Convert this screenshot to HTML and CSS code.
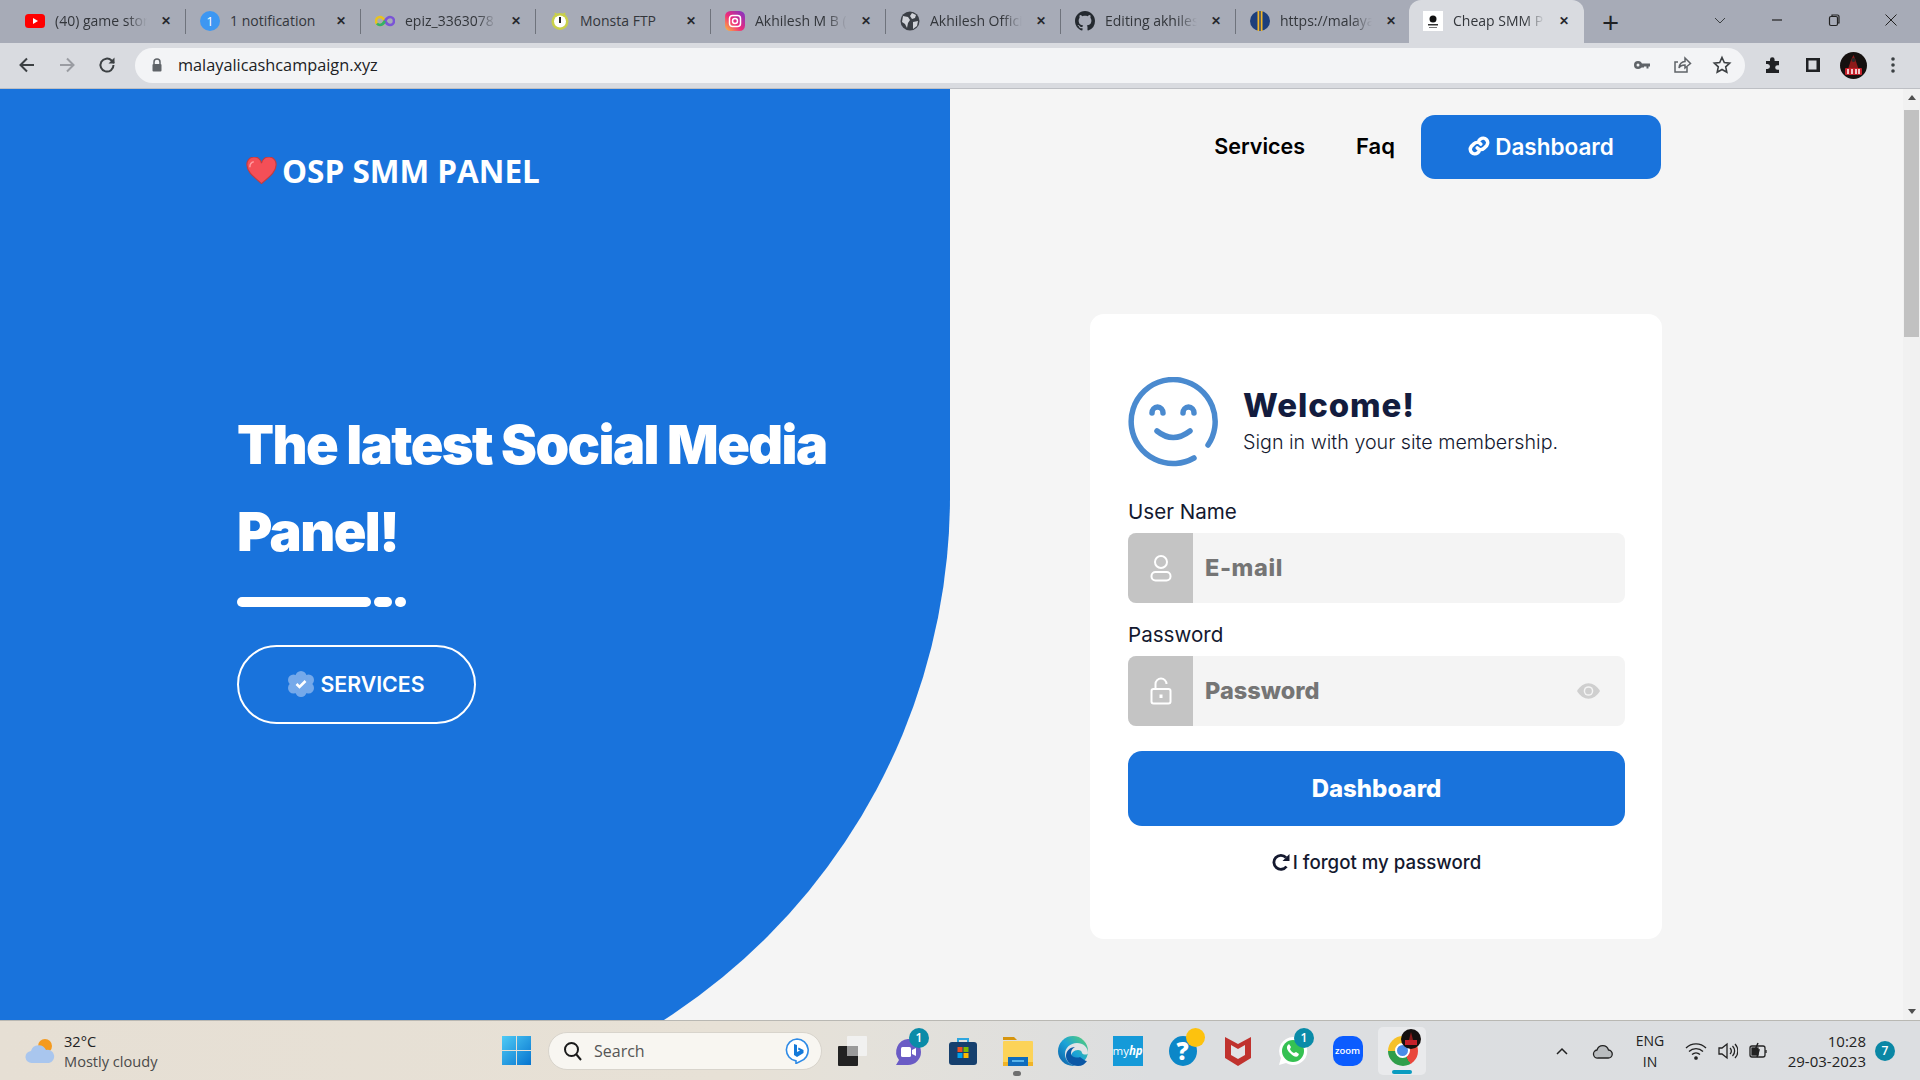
FILE: index.html
```html
<!DOCTYPE html>
<html lang="en">
<head>
<meta charset="utf-8">
<title>Cheap SMM Panel</title>
<link rel="stylesheet" href="styles.css">
</head>
<body>
<div class="screen">
  <header class="tabstrip">
    <div class="tab"><svg class="fav" viewBox="0 0 20 20"><rect x="0" y="3" width="20" height="14" rx="3.5" fill="#f00"/><path d="M8 7l5 3-5 3z" fill="#fff"/></svg><span class="tab-title">(40) game stor</span><span class="tab-x">✕</span></div><i class="sep"></i>
    <div class="tab"><svg class="fav" viewBox="0 0 20 20"><circle cx="10" cy="10" r="10" fill="#3d97f2"/><text x="10" y="15" class="fav-num">1</text></svg><span class="tab-title tab-plain">1 notification</span><span class="tab-x">✕</span></div><i class="sep"></i>
    <div class="tab"><svg class="fav" viewBox="0 0 20 20" fill="none" stroke-width="2.6"><path d="M10 10C8 6.5 6.500 6 5 6a4 4 0 0 0 0 8c1.500 0 3-.5 5-4z" stroke="#e8c31f"/><path d="M10 10c2-3.500 3.500-4 5-4a4 4 0 0 1 0 8c-1.500 0-3-.5-5-4z" stroke="#7a54d6"/><path d="M2 12.500A4 4 0 0 0 5 14c1.500 0 3-.5 5-4" stroke="#31b26a"/></svg><span class="tab-title">epiz_3363078</span><span class="tab-x">✕</span></div><i class="sep"></i>
    <div class="tab"><svg class="fav" viewBox="0 0 20 20"><circle cx="10" cy="10.500" r="8.500" fill="#c9d04a"/><circle cx="10" cy="10.500" r="6" fill="#fff"/><rect x="9" y="6" width="2" height="6" fill="#222"/><path d="M5 2l2 3M15 2l-2 3" stroke="#c9d04a" stroke-width="2"/></svg><span class="tab-title tab-plain">Monsta FTP</span><span class="tab-x">✕</span></div><i class="sep"></i>
    <div class="tab"><svg class="fav" viewBox="0 0 20 20"><defs><linearGradient id="ig" x1="0" y1="1" x2="1" y2="0"><stop offset="0" stop-color="#fdc13a"/><stop offset=".45" stop-color="#ee2a7b"/><stop offset="1" stop-color="#7a35c9"/></linearGradient></defs><rect width="20" height="20" rx="5.500" fill="url(#ig)"/><rect x="4.500" y="4.500" width="11" height="11" rx="3" fill="none" stroke="#fff" stroke-width="1.500"/><circle cx="10" cy="10" r="2.500" fill="none" stroke="#fff" stroke-width="1.500"/></svg><span class="tab-title">Akhilesh M B (</span><span class="tab-x">✕</span></div><i class="sep"></i>
    <div class="tab"><svg class="fav" viewBox="0 0 20 20"><circle cx="10" cy="10" r="9.500" fill="#3b3f46"/><path d="M3 5l5 1 2 3-2 3-1 5-2-4-3-2zM12 2l4 2-1 3-3 1-2-3zM13 11l5-1-1 5-4 3z" fill="#d0d2d8"/></svg><span class="tab-title">Akhilesh Offici</span><span class="tab-x">✕</span></div><i class="sep"></i>
    <div class="tab"><svg class="fav" viewBox="0 0 16 16"><path fill="#24292f" d="M8 0C3.580 0 0 3.580 0 8c0 3.540 2.290 6.530 5.470 7.590.4.070.55-.17.55-.38 0-.19-.01-.82-.01-1.490-2.010.37-2.530-.49-2.690-.94-.09-.23-.48-.94-.82-1.130-.28-.15-.68-.52-.01-.53.630-.01 1.080.58 1.230.82.720 1.210 1.870.87 2.330.66.070-.52.28-.87.510-1.070-1.780-.2-3.640-.89-3.640-3.950 0-.87.310-1.590.820-2.150-.08-.2-.36-1.020.08-2.120 0 0 .67-.21 2.200.82.640-.18 1.320-.27 2-.27s1.360.09 2 .27c1.530-1.040 2.200-.82 2.200-.82.440 1.100.160 1.920.08 2.120.510.560.820 1.270.820 2.150 0 3.070-1.870 3.750-3.650 3.950.290.250.540.730.540 1.480 0 1.070-.01 1.930-.01 2.200 0 .21.150.46.550.38A8.010 8.010 0 0 0 16 8c0-4.420-3.580-8-8-8z"/></svg><span class="tab-title">Editing akhiles</span><span class="tab-x">✕</span></div><i class="sep"></i>
    <div class="tab"><svg class="fav" viewBox="0 0 20 20"><circle cx="10" cy="10" r="10" fill="#1d3f7c"/><rect x="7.500" y="0" width="5" height="20" fill="#f0b429"/><rect x="9.300" y="0" width="1.400" height="20" fill="#1d3f7c"/></svg><span class="tab-title">https://malaya</span><span class="tab-x">✕</span></div>
    <div class="tab tab-active"><span class="fav fav-logo"><svg viewBox="0 0 20 20"><circle cx="10" cy="8" r="3.500" fill="#111"/><rect x="5" y="13" width="10" height="1.500" fill="#333"/><rect x="6" y="16" width="8" height="1" fill="#777"/></svg></span><span class="tab-title">Cheap SMM P</span><span class="tab-x">✕</span></div>
    <span class="newtab">+</span>
    <div class="winctl">
      <svg class="ctl" viewBox="0 0 14 14" fill="none" stroke="#3c4043" stroke-width="1"><path d="M2 5l5 5 5-5"/></svg>
      <svg class="ctl" viewBox="0 0 14 14" fill="none" stroke="#222" stroke-width="1.200"><path d="M2 7h10"/></svg>
      <svg class="ctl" viewBox="0 0 14 14" fill="none" stroke="#222" stroke-width="1.200"><rect x="2.500" y="3.500" width="8" height="9" rx="1.500"/><path d="M5 3V2h5.500A1.500 1.500 0 0 1 12 3.500V10h-1"/></svg>
      <svg class="ctl" viewBox="0 0 14 14" fill="none" stroke="#222" stroke-width="1"><path d="M1.500 1.500l11 11M12.500 1.500l-11 11"/></svg>
    </div>
  </header>

  <nav class="toolbar">
    <svg class="tool" viewBox="0 0 20 20" fill="none" stroke="#3c4043" stroke-width="2"><path d="M17 10H4M10 3.500L3.500 10l6.500 6.500"/></svg>
    <svg class="tool" viewBox="0 0 20 20" fill="none" stroke="#9a9ca2" stroke-width="2"><path d="M3 10h13M10 3.500l6.500 6.500-6.500 6.500"/></svg>
    <svg class="tool" viewBox="0 0 20 20" fill="none" stroke="#3c4043" stroke-width="2"><path d="M16.500 10a6.500 6.500 0 1 1-1.900-4.500L17 8"/><path d="M17.500 2.500V8.500H11.500" fill="#3c4043" stroke="none"/></svg>
    <div class="omnibox">
      <svg class="lock" viewBox="0 0 12 14"><path d="M3 6V4a3 3 0 0 1 6 0v2" fill="none" stroke="#5f6368" stroke-width="1.500"/><rect x="1.500" y="6" width="9" height="7.500" rx="1" fill="#5f6368"/></svg>
      <span class="url">malayalicashcampaign.xyz</span>
      <div class="omni-icons">
        <svg class="omni-ic" viewBox="0 0 20 20" fill="#5f6368"><circle cx="6" cy="10" r="4"/><path d="M8 8.500h10v3h-1.500v2h-2v-2H12v1H9z"/><circle cx="6" cy="10" r="1.500" fill="#f3f4f6"/></svg>
        <svg class="omni-ic" viewBox="0 0 20 20" fill="none" stroke="#5f6368" stroke-width="1.500"><path d="M15 12v5H3V7h3"/><path d="M7 13c0-4 3-6.500 6-6.500V3l5.500 5.500L13 13V10c-3 0-5 1-6 3z"/></svg>
        <svg class="omni-ic" viewBox="0 0 20 20" fill="none" stroke="#3c4043" stroke-width="1.600"><path d="M10 2.500l2.300 5 5.400.6-4 3.700 1.100 5.400L10 14.500l-4.800 2.700 1.100-5.400-4-3.700 5.400-.6z"/></svg>
      </div>
    </div>
    <svg class="tool-ext" viewBox="0 0 20 20" fill="#202124"><path d="M3 6h4V4.500a2.300 2.300 0 0 1 4.600 0V6H16v4.200h-1.500a2.300 2.300 0 0 0 0 4.600H16V18H3v-4h1.500a2.500 2.500 0 0 0 0-5H3z"/></svg>
    <svg class="tool-ext" viewBox="0 0 20 20"><path d="M3 3h14v14H3zm2.500 2.500v9h8v-9z" fill="#202124" fill-rule="evenodd"/></svg>
    <svg class="avatar" viewBox="0 0 27 27"><circle cx="13.500" cy="13.500" r="13.500" fill="#15100f"/><path d="M13.500 3l2 5 3 9H8l3-9z" fill="#8d1a1a"/><circle cx="13.500" cy="8" r="2" fill="#2b2a2a"/><rect x="5" y="16" width="17" height="7" rx="1" fill="#c4202a"/><path d="M8 17v5M12 17v5M16 17v5M19 17v5" stroke="#fff" stroke-width="1.500"/></svg>
    <svg class="tool-menu" viewBox="0 0 6 20" fill="#3c4043"><circle cx="3" cy="4" r="1.800"/><circle cx="3" cy="10" r="1.800"/><circle cx="3" cy="16" r="1.800"/></svg>
  </nav>

  <main class="page">
    <section class="hero">
      <div class="logo">
        <svg class="heart" viewBox="0 0 32 28"><path d="M16 27C8 20 1 15 1 8a7 7 0 0 1 15-2 7 7 0 0 1 15 2c0 7-7 12-15 19z" fill="#f44f57" stroke="#c03c3f" stroke-width="1.200"/><path d="M4 10c0-3 1.500-5 4-5.500" fill="none" stroke="#ff9a9e" stroke-width="1.500"/></svg>
        <span class="logo-text">OSP SMM PANEL</span>
      </div>
      <h1 class="hero-title">The latest Social Media Panel!</h1>
      <div class="dashes"><i class="dash-long"></i><i class="dash-mid"></i><i class="dash-dot"></i></div>
      <a class="btn-outline">
        <svg class="badge-ic" viewBox="0 0 26 26"><g fill="#75a9ea"><circle cx="13" cy="5.500" r="5.500"/><circle cx="20.500" cy="9" r="5.500"/><circle cx="20.500" cy="17" r="5.500"/><circle cx="13" cy="20.500" r="5.500"/><circle cx="5.500" cy="17" r="5.500"/><circle cx="5.500" cy="9" r="5.500"/><circle cx="13" cy="13" r="8"/></g><path d="M8.500 13l3 3 6-6" fill="none" stroke="#fff" stroke-width="2.600"/></svg>
        SERVICES
      </a>
    </section>

    <section class="side">
      <div class="topnav">
        <a class="nav-link nav-services">Services</a>
        <a class="nav-link nav-faq">Faq</a>
        <a class="btn-nav">
          <svg class="link-ic" viewBox="0 0 24 24" fill="none" stroke="#fff" stroke-width="3.800" stroke-linecap="round"><path d="M10 14a5 5 0 0 0 7.500.5l3-3a5 5 0 0 0-7-7l-1.500 1.500"/><path d="M14 10a5 5 0 0 0-7.500-.5l-3 3a5 5 0 0 0 7 7l1.500-1.500"/></svg>
          Dashboard
        </a>
      </div>
      <div class="card">
        <div class="card-head">
          <svg class="smile" viewBox="0 0 90 90" fill="none" stroke="#4a8acf" stroke-width="5.500" stroke-linecap="round"><path d="M66 81A42 42 0 1 1 80 68"/><path d="M24 36a5.500 6 0 0 1 11 0M55 36a5.500 6 0 0 1 11 0"/><path d="M29 54q16 13 33 0"/></svg>
          <div>
            <h2 class="welcome">Welcome!</h2>
            <p class="subtitle">Sign in with your site membership.</p>
          </div>
        </div>
        <label class="field-label">User Name</label>
        <div class="field">
          <span class="field-icon"><svg viewBox="0 0 22 28" fill="none" stroke="#fff" stroke-width="2"><circle cx="11" cy="8" r="6"/><rect x="1.500" y="18" width="19" height="8.500" rx="4"/></svg></span>
          <span class="placeholder ph-email">E-mail</span>
        </div>
        <label class="field-label label-gap">Password</label>
        <div class="field">
          <span class="field-icon"><svg viewBox="0 0 22 28" fill="none" stroke="#fff" stroke-width="2"><path d="M5.500 12V7a5.500 5.500 0 0 1 11 0"/><rect x="1.500" y="12" width="19" height="14.500" rx="2"/><rect x="9.500" y="17.500" width="3" height="3.500" fill="#fff" stroke="none"/></svg></span>
          <span class="placeholder">Password</span>
          <svg class="eye" viewBox="0 0 24 16"><path d="M0 8c3-5 7.500-8 12-8s9 3 12 8c-3 5-7.500 8-12 8S3 13 0 8z" fill="#cfcfcf"/><circle cx="12" cy="8" r="5" fill="#f4f4f4"/><circle cx="12" cy="8" r="3.500" fill="#cfcfcf"/></svg>
        </div>
        <a class="btn-primary">Dashboard</a>
        <a class="forgot">
          <svg class="redo" viewBox="0 0 18 18" fill="none" stroke="#14192f" stroke-width="2.800"><path d="M14.500 13.500A7 7 0 1 1 14 4.500"/><path d="M17.500 1v7h-7z" fill="#14192f" stroke="none"/></svg>
          I forgot my password
        </a>
      </div>
    </section>

    <aside class="scrollbar">
      <span class="arrow-up"></span>
      <span class="thumb"></span>
      <span class="arrow-down"></span>
    </aside>
  </main>

  <footer class="taskbar">
    <div class="weather">
      <svg class="weather-ic" viewBox="0 0 30 26"><circle cx="20" cy="8" r="7" fill="#f49a1f"/><path d="M7 25a6 6 0 0 1-1-12 8 8 0 0 1 15-1 6.500 6.500 0 0 1 3 13z" fill="#a9c6ee"/></svg>
      <div class="weather-text"><span class="w-temp">32°C</span><span class="w-desc">Mostly cloudy</span></div>
    </div>
    <svg class="start" viewBox="0 0 29 29"><defs><linearGradient id="win" x1="0" y1="0" x2="1" y2="1"><stop offset="0" stop-color="#4fcbf5"/><stop offset="1" stop-color="#0674cf"/></linearGradient></defs><path d="M0 0h14v14H0zM15 0h14v14H15zM0 15h14v14H0zM15 15h14v14H15z" fill="url(#win)"/></svg>
    <div class="searchbox">
      <svg class="search-ic" viewBox="0 0 20 20" fill="none" stroke="#1a1a1a" stroke-width="2"><circle cx="8.500" cy="8.500" r="6.500"/><path d="M13 13l5 6"/></svg>
      <span class="search-text">Search</span>
      <svg class="bing" viewBox="0 0 26 26"><path d="M13 1a11.500 11.500 0 0 1 3 22.500L12 25.500v-2.600A11 11 0 0 1 13 1z" fill="#fff" stroke="#2f8be6" stroke-width="1.600"/><path d="M10 6l3 1v7l3-1.500-2-1 .5-2 5 2.500v3L13 19l-3-2z" fill="#1479d9"/></svg>
    </div>
    <div class="apps">
      <span class="app"><svg viewBox="0 0 30 30"><rect x="0" y="10" width="20" height="20" rx="1" fill="#222"/><rect x="9" y="0" width="20" height="20" rx="1" fill="#f3f3f3" opacity=".85"/><rect x="9" y="10" width="11" height="10" fill="#9a9a9a"/></svg></span>
      <span class="app"><svg viewBox="0 0 30 30"><path d="M15 3a13 13 0 0 1 0 26H3l3-5A13 13 0 0 1 15 3z" fill="#6a5bc5"/><rect x="8" y="11" width="10" height="10" rx="1.500" fill="#fff"/><path d="M19 14l4-2v8l-4-2z" fill="#fff"/></svg><b class="count">1</b></span>
      <span class="app"><svg viewBox="0 0 30 30"><path d="M10 7V3h10v4" fill="none" stroke="#2ea6df" stroke-width="2"/><rect x="1" y="6" width="28" height="23" rx="3" fill="#16406e"/><rect x="9.500" y="11" width="5" height="5" fill="#f05022"/><rect x="15.500" y="11" width="5" height="5" fill="#7eba00"/><rect x="9.500" y="17" width="5" height="5" fill="#00a3ee"/><rect x="15.500" y="17" width="5" height="5" fill="#fdb900"/></svg></span>
      <span class="app"><svg viewBox="0 0 30 30"><path d="M0 1h11l3 3h-14z" fill="#d6950f"/><rect y="5" width="30" height="25" rx="1" fill="#fcd358"/><rect y="26" width="30" height="4" fill="#f0b429"/><path d="M5 21h20v9H5z" fill="#0f6cbd"/><path d="M9 24h12v2H9z" fill="#57b3ea"/></svg><i class="app-dot"></i></span>
      <span class="app"><svg viewBox="0 0 30 30"><defs><linearGradient id="edge" x1="0" y1="1" x2="1" y2="0"><stop offset="0" stop-color="#0c59a4"/><stop offset=".5" stop-color="#1ba3d8"/><stop offset="1" stop-color="#5ed36c"/></linearGradient></defs><circle cx="15" cy="15" r="15" fill="url(#edge)"/><path d="M30 17c0-6-5-10-11-10-7 0-12 5-12 11 0 6 5 12 13 12-5-2-7-6-7-9 0-4 3-7 7-7 2 0 4 1 4 3 1 2 6 2 6 0z" fill="#e1e3e6"/><path d="M22 21c-2 1-9 1-9-4 0-3 2-5 4-6-5 0-9 4-9 9 0 6 6 10 12 10 4 0 7-2 9-5-2 0-4-2-7-4z" fill="#0b58a6"/></svg></span>
      <span class="app"><span class="myhp">my<em>hp</em></span></span>
      <span class="app"><span class="help">?</span><i class="help-dot"></i></span>
      <span class="app"><svg viewBox="0 0 28 30"><path d="M1 1l13 7 13-7v21l-13 8-13-8z" fill="#c0322e"/><path d="M7 9l7 4 7-4v10l-7 4-7-4z" fill="#e2e3e6"/></svg></span>
      <span class="app"><svg viewBox="0 0 30 30"><path d="M15 1a14 14 0 1 1-7 26L1 29l2-7A14 14 0 0 1 15 1z" fill="#fff"/><circle cx="15" cy="15" r="11" fill="#35c152"/><path d="M10 9c-2 2-1 5 2 8s6 5 8 3l1-2-3-2-2 1c-1 0-4-3-4-4l1-2-2-3z" fill="#fff"/></svg><b class="count">1</b></span>
      <span class="app"><span class="zoomapp">zoom</span></span>
      <span class="app app-on"><span class="chrome"><span class="chrome-in"></span></span><svg class="chrome-av" viewBox="0 0 20 20"><circle cx="10" cy="10" r="10" fill="#15100f"/><path d="M10 3l2 8H8z" fill="#8d1a1a"/><rect x="4" y="11" width="12" height="5" fill="#c4202a"/></svg><i class="app-bar"></i></span>
    </div>
    <div class="tray">
      <svg class="tray-caret" viewBox="0 0 14 14" fill="none" stroke="#222" stroke-width="1.500"><path d="M2 10l5-5 5 5"/></svg>
      <svg class="tray-cloud" viewBox="0 0 22 20" fill="#b9bcbf" stroke="#222" stroke-width="1.300"><path d="M6 17a4 4 0 0 1-1-8 6 6 0 0 1 11.500 0 4 4 0 0 1-.5 8z"/></svg>
      <div class="lang"><span>ENG</span><span>IN</span></div>
      <svg class="tray-ic" viewBox="0 0 22 20" fill="none" stroke="#222" stroke-width="1.300"><path d="M1 7a14 14 0 0 1 20 0M4 10.500a10 10 0 0 1 14 0M7 13.500a6 6 0 0 1 8 0"/><circle cx="11" cy="17" r="1.200" fill="#222"/></svg>
      <svg class="tray-ic" viewBox="0 0 22 20" fill="none" stroke="#222" stroke-width="1.300"><path d="M3 7h3l5-4v14l-5-4H3z"/><path d="M14 7a4 4 0 0 1 0 6M16.500 5a7 7 0 0 1 0 10M19 3a10 10 0 0 1 0 14"/></svg>
      <svg class="tray-ic" viewBox="0 0 22 20" fill="none" stroke="#222" stroke-width="1.300"><rect x="3" y="5" width="15" height="11" rx="2"/><rect x="5" y="7" width="6" height="7" fill="#222"/><path d="M19 9v3"/><path d="M11 2L8 9h4l-2 7" stroke-width="1.500"/></svg>
      <div class="clock"><span>10:28</span><span>29-03-2023</span></div>
      <b class="notif">7</b>
    </div>
  </footer>
</div>
</body>
</html>
```
FILE: styles.css
```css
* { box-sizing: border-box; }
html, body { margin: 0; height: 100%; overflow: hidden; }
body { font-family: "Inter", "Liberation Sans", sans-serif; }
a { display: block; }
.screen { width: 1920px; height: 1080px; display: flex; flex-direction: column; overflow: hidden; }

/* browser tabs */
.tabstrip { height: 43px; flex: none; background: #a7abb7; display: flex; align-items: stretch; padding-left: 11px; font-family: "Open Sans", sans-serif; }
.tab { width: 174px; flex: none; display: flex; align-items: center; padding: 0 10px 2px 14px; gap: 10px; position: relative; color: #33363b; font-size: 14px; }
.sep { width: 1px; flex: none; margin: 9px 0; background: #6f737c; }
.fav { width: 20px; height: 20px; flex: none; }
.fav-num { font: 13px "Open Sans", sans-serif; fill: #fff; text-anchor: middle; }
.fav-logo { background: #fff; display: block; }
.fav-logo svg { width: 20px; height: 20px; display: block; }
.tab-title { flex: 1; min-width: 0; white-space: nowrap; -webkit-mask-image: linear-gradient(90deg, #000 78%, transparent 100%); mask-image: linear-gradient(90deg, #000 78%, transparent 100%); }
.tab-title.tab-plain { -webkit-mask-image: none; mask-image: none; }
.tab-x { width: 18px; flex: none; text-align: center; font-size: 12px; font-weight: 700; color: #26282c; }
.tab-active { width: 175px; margin-left: -1px; background: #d9dbe0; border-radius: 12px 12px 0 0; padding-right: 11px; }
.newtab { width: 53px; flex: none; text-align: center; font-size: 30px; font-weight: 400; line-height: 43px; color: #202124; }
.winctl { flex: 1; display: flex; align-items: center; padding: 0 22px 4px 0; justify-content: flex-end; gap: 43px; }
.ctl { width: 14px; height: 14px; }

/* browser toolbar */
.toolbar { height: 46px; flex: none; background: #d9dbe0; display: flex; align-items: center; padding: 0 19px 1px 17px; border-bottom: 1px solid #bdbfc4; }
.tool { width: 20px; height: 20px; margin-right: 20px; flex: none; }
.omnibox { width: 1610px; height: 35px; margin: 0 0 0 -2px; flex: none; border-radius: 18px; background: #f3f4f6; display: flex; align-items: center; padding: 0 13px 0 16px; }
.lock { width: 12px; height: 14px; margin-right: 15px; flex: none; }
.url { font: 16.300px "Open Sans", sans-serif; color: #202124; }
.omni-icons { margin-left: auto; display: flex; gap: 20px; }
.omni-ic { width: 20px; height: 20px; }
.tool-ext { width: 20px; height: 20px; flex: none; margin-left: 18px; }
.tool-ext + .tool-ext { margin-left: 20px; }
.avatar { width: 27px; height: 27px; margin-left: 17px; flex: none; }
.tool-menu { width: 6px; height: 20px; margin-left: 23px; flex: none; }

/* page */
.page { flex: 1; min-height: 0; display: flex; background: #f5f5f5; overflow: hidden; }
.hero { width: 950px; height: 1030px; flex: none; background: #1973dc; border-bottom-right-radius: 623px; padding: 68px 0 0 237px; color: #fff; }
.logo { display: flex; align-items: center; gap: 5px; margin-left: 9px; height: 28px; font: 700 31.500px "Open Sans", sans-serif; }
.logo-text { margin-top: -2px; }
.heart { width: 31px; height: 28px; flex: none; }
.hero-title { margin: 216px 0 0; width: 640px; font-size: 54px; font-weight: 900; line-height: 87px; letter-spacing: -1.600px; }
.dashes { display: flex; gap: 3px; margin-top: 22px; height: 10px; }
.dashes i { display: block; background: #fff; border-radius: 5px; height: 10px; }
.dash-long { width: 134px; }
.dash-mid { width: 18px; }
.dash-dot { width: 11px; }
.btn-outline { margin-top: 38px; width: 239px; height: 79px; border: 2.500px solid #fff; border-radius: 40px; display: flex; align-items: center; justify-content: center; gap: 6px; padding-bottom: 2px; font-size: 21.300px; font-weight: 600; color: #fff; }
.badge-ic { width: 26px; height: 26px; flex: none; }
.side { flex: 1; min-width: 0; padding-top: 26px; }
.topnav { display: flex; align-items: center; padding-right: 242px; justify-content: flex-end; height: 64px; color: #000; }
.nav-link { font-size: 21.500px; font-weight: 600; padding-bottom: 2px; }
.nav-services { margin-right: 51px; }
.nav-faq { margin-right: 26px; font-size: 22px; }
.btn-nav { width: 240px; height: 64px; border-radius: 14px; background: #1973dc; color: #fff; display: flex; align-items: center; justify-content: center; gap: 5px; padding-bottom: 2px; font-size: 22.500px; font-weight: 600; }
.link-ic { width: 22px; height: 22px; flex: none; }
.card { width: 572px; height: 625px; margin: 135px 0 0 140px; background: #fff; border-radius: 14px; padding: 63px 37px 0 38px; color: #14192f; }
.card-head { display: flex; align-items: center; gap: 25px; margin-bottom: 30px; }
.smile { width: 90px; height: 90px; flex: none; }
.welcome { margin: -3px 0 0; font-size: 33px; line-height: 36px; font-weight: 800; letter-spacing: .9px; color: #131c3e; }
.subtitle { margin: 6px 0 0; font-size: 19.700px; line-height: 26px; font-weight: 300; }
.field-label { display: block; font-size: 20.600px; line-height: 30px; margin-bottom: 6px; font-weight: 400; }
.label-gap { margin-top: 17px; }
.field { height: 70px; background: #f4f4f4; border-radius: 8px; display: flex; align-items: center; overflow: hidden; }
.field-icon { width: 65px; height: 70px; flex: none; background: #c4c4c4; display: flex; align-items: center; justify-content: center; }
.field-icon svg { width: 22px; height: 28px; }
.placeholder { margin-left: 12px; padding-bottom: 1px; font-size: 23.500px; font-weight: 800; color: #757575; }
.ph-email { letter-spacing: .6px; }
.eye { width: 23px; height: 16px; margin-left: auto; margin-right: 25px; }
.btn-primary { margin-top: 25px; height: 75px; border-radius: 14px; background: #1973dc; color: #fff; display: flex; align-items: center; justify-content: center; font-size: 24px; font-weight: 800; }
.forgot { margin-top: 21px; height: 30px; display: flex; align-items: center; justify-content: center; gap: 3px; font-size: 18.700px; font-weight: 500; }
.redo { width: 18px; height: 18px; flex: none; }

/* scrollbar */
.scrollbar { width: 17px; flex: none; background: #f1f1f1; display: flex; flex-direction: column; align-items: center; padding-top: 6px; }
.arrow-up { width: 0; height: 0; border: 4px solid transparent; border-top: 0; border-bottom: 5px solid #505050; }
.thumb { width: 15px; height: 227px; margin-top: 10px; background: #c1c1c1; }
.arrow-down { width: 0; height: 0; margin-top: auto; margin-bottom: 6px; border: 4px solid transparent; border-bottom: 0; border-top: 5px solid #505050; }

/* taskbar */
.taskbar { height: 60px; flex: none; border-top: 1px solid #b9b8b3; background: linear-gradient(90deg, #e6dfd4 0, #e7e1d6 38%, #e4e1da 45%, #dcdee0 60%, #dcdee1 100%); display: flex; align-items: center; font-family: "Open Sans", sans-serif; color: #222; }
.weather { width: 502px; flex: none; display: flex; align-items: center; padding-left: 25px; gap: 9px; }
.weather-ic { width: 30px; height: 26px; flex: none; }
.weather-text { display: flex; flex-direction: column; font-size: 14.600px; line-height: 20px; }
.w-desc { color: #4a4a4a; }
.start { width: 29px; height: 29px; flex: none; }
.searchbox { width: 274px; height: 38px; margin-left: 17px; flex: none; border-radius: 19px; background: #f8f6f1; border: 1px solid #d8d4cc; display: flex; align-items: center; padding-left: 14px; }
.search-ic { width: 20px; height: 20px; flex: none; }
.search-text { margin-left: 11px; font-size: 16px; color: #555; }
.bing { width: 26px; height: 26px; margin-left: auto; margin-right: 11px; }
.apps { display: flex; flex: none; align-items: center; margin-left: 3px; }
.app { width: 55px; height: 48px; flex: none; display: flex; align-items: center; justify-content: center; position: relative; }
.app > svg { width: 30px; height: 30px; }
.count { position: absolute; top: 1px; right: 6px; width: 20px; height: 20px; border-radius: 50%; background: #0a8ba8; color: #fff; font-size: 12px; font-weight: 600; line-height: 20px; text-align: center; }
.app-dot { position: absolute; bottom: -1px; left: 23px; width: 8px; height: 5px; border-radius: 3px; background: #6f6f6f; }
.myhp { width: 30px; height: 30px; background: #159ad9; color: #fff; font-size: 11.500px; line-height: 30px; text-align: center; }
.myhp em { font-weight: 700; }
.help { width: 28px; height: 30px; border-radius: 50%; background: #0b87c8; color: #fff; font-size: 24px; font-weight: 800; line-height: 30px; text-align: center; }
.help-dot { position: absolute; top: 1px; right: 5px; width: 19px; height: 19px; border-radius: 50%; background: #fdc20e; }
.zoomapp { width: 30px; height: 30px; border-radius: 10px; background: #0b5cff; color: #fff; font-size: 9.500px; font-weight: 600; line-height: 30px; text-align: center; }
.app-on::before { content: ""; position: absolute; left: 3px; right: 4px; top: 0; bottom: 0; border-radius: 5px; background: #e9eaec; }
.chrome { width: 30px; height: 30px; position: relative; border-radius: 50%; background: conic-gradient(from 30deg, #e9473c 0 120deg, #2f9e4a 120deg 240deg, #f6c12a 240deg 360deg); display: flex; align-items: center; justify-content: center; }
.chrome-in { width: 15px; height: 15px; border-radius: 50%; background: #4a8ce8; border: 2.500px solid #fff; }
.app > .chrome-av { position: absolute; top: 2px; right: 9px; width: 20px; height: 20px; }
.app-bar { position: absolute; bottom: 1px; left: 17px; width: 20px; height: 4px; border-radius: 2px; background: #0a9cc0; }
.tray { display: flex; align-items: center; margin-left: auto; padding-right: 25px; flex: none; }
.tray-caret { width: 14px; height: 14px; margin-right: 23px; }
.tray-cloud { width: 22px; height: 20px; margin-right: 11px; }
.lang { width: 50px; display: flex; flex-direction: column; align-items: center; font-size: 14px; line-height: 21px; margin-right: 10px; }
.tray-ic { width: 22px; height: 20px; margin-right: 9px; }
.clock { width: 88px; display: flex; flex-direction: column; align-items: flex-end; font-size: 15px; line-height: 20px; }
.notif { width: 20px; height: 20px; margin-left: 9px; border-radius: 50%; background: #0a87a5; color: #fff; font-size: 12px; font-weight: 600; line-height: 20px; text-align: center; }
```
